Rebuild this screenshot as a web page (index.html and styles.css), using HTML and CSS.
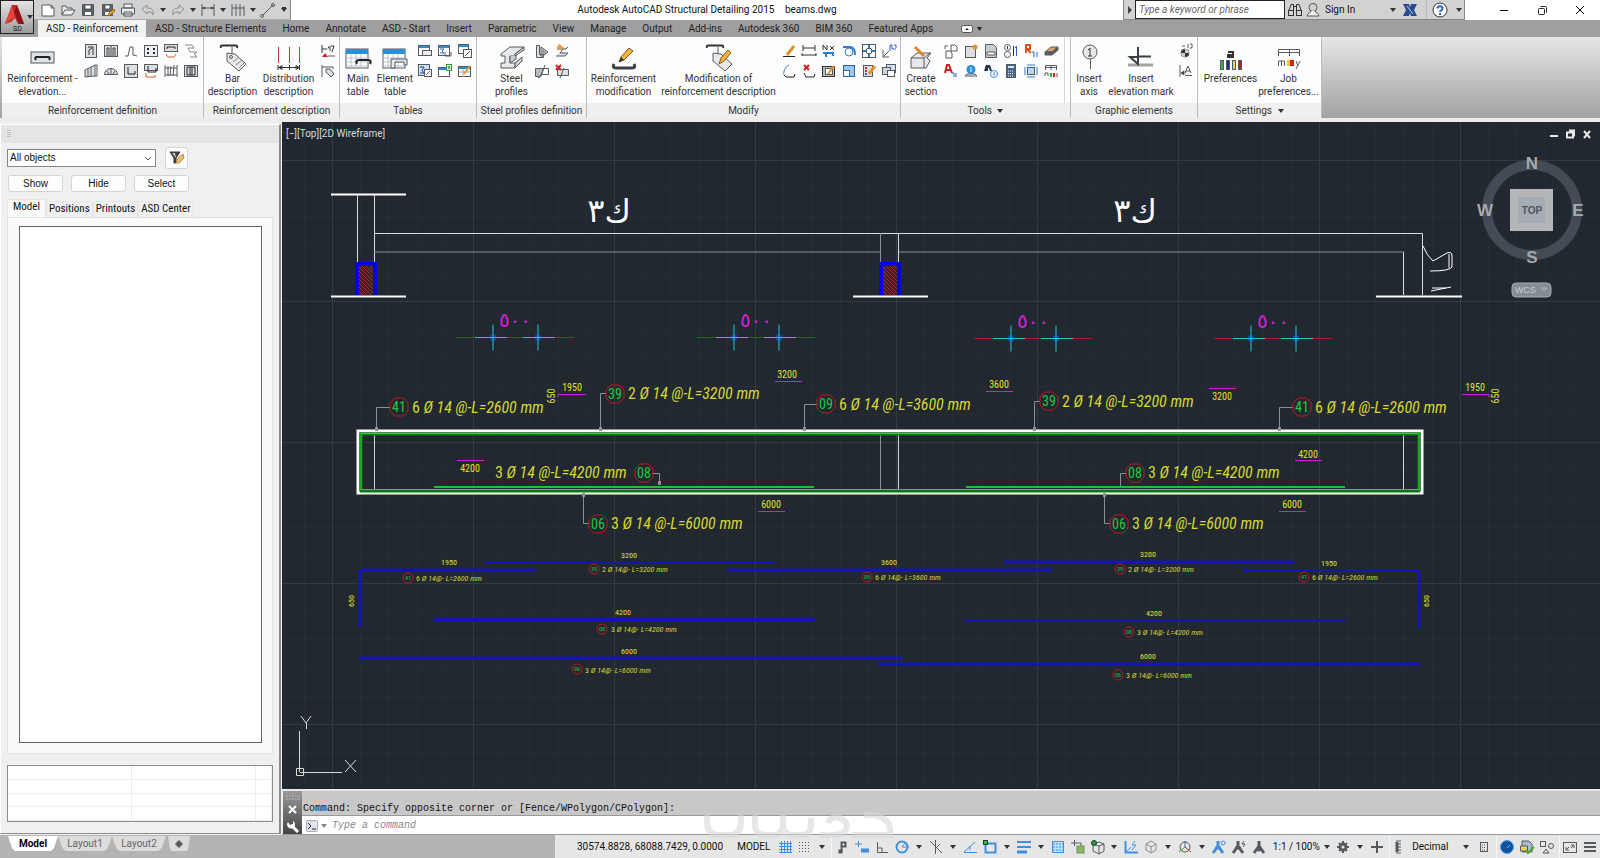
FILE: index.html
```
<!DOCTYPE html>
<html lang="en">
<head>
  <meta charset="UTF-8" />
  <title>Autodesk AutoCAD Structural Detailing 2015 - beams.dwg</title>
  <link rel="stylesheet" href="styles.css">
</head>
<body>
  <header class="titlebar">
    <button class="app-btn" aria-label="Application menu">
      <svg width="32" height="32" viewBox="0 0 32 32">
        <path d="M4 23 L11 4 H16 L23 23 H17 L14 17 L10 21 Z" fill="#c1272d"/>
        <path d="M11 4 L4 23 L14 16 Z" fill="#e2453c"/>
        <path d="M16 4 L23 23 H18 L13 11 Z" fill="#8e1216"/>
        <path d="M26 14 h6 l-3 4z" fill="#333"/>
      </svg>
      <span>SD</span>
    </button>
    <div class="qat">
      <button aria-label="New"><svg class="ico" viewBox="0 0 16 16"><path d="M2 3h9l3 3v8H2z M11 3v3h3" fill="#fff"/></svg></button>
      <button aria-label="Open"><svg class="ico" viewBox="0 0 16 16"><path d="M2 13V4h4l1 2h5v2 M2 13l3-5h10l-3 5z" fill="#eee"/></svg></button>
      <button aria-label="Save"><svg class="ico" viewBox="0 0 16 16"><path d="M2.500 2.500h11v11h-11z" fill="#5a606a"/><path d="M5 3h6v4H5zM4.500 9.500h7v4h-7z" fill="#fff"/></svg></button>
      <button aria-label="Save as"><svg class="ico" viewBox="0 0 16 16"><path d="M2.500 2.500h10v11h-10z" fill="#5a606a"/><path d="M5 3h5v4H5zM4.500 9.500h5v4h-5z" fill="#fff"/><path d="M8 14l1-3 5-4 1 2-5 4z" fill="#f0b13c" stroke="#a66a10"/></svg></button>
      <button aria-label="Print"><svg class="ico" viewBox="0 0 16 16"><path d="M4 2h8v4H4zM1.500 6h13v6h-13z M4 10h8v4H4z" fill="#eee"/></svg></button>
      <button aria-label="Undo"><svg class="ico dim" viewBox="0 0 16 16"><path d="M2 7l5-4v3c5 0 7 2 6 7-1-3-3-3-6-3v2z"/></svg></button>
      <button class="drop" aria-label="Undo list"></button>
      <button aria-label="Redo"><svg class="ico dim" viewBox="0 0 16 16"><path d="M14 7L9 3v3c-5 0-7 2-6 7 1-3 3-3 6-3v2z"/></svg></button>
      <button class="drop" aria-label="Redo list"></button>
      <button aria-label="Linear dimension"><svg class="ico" viewBox="0 0 16 16"><path d="M2 2v12M14 2v12M2 6h12M2 6l3-1v2zM14 6l-3-1v2z"/></svg></button>
      <button class="drop" aria-label="Dimension list"></button>
      <button aria-label="Chain dimension"><svg class="ico" viewBox="0 0 16 16"><path d="M2 2v12M6 2v12M10 2v12M14 4v10M2 6h12"/></svg></button>
      <button class="drop" aria-label="Chain list"></button>
      <button aria-label="Line"><svg class="ico" viewBox="0 0 16 16"><path d="M3 13L13 3"/><circle cx="2" cy="14" r="1.500"/><circle cx="13" cy="3" r="1.500"/></svg></button>
      <button class="drop more" aria-label="Customize toolbar"></button>
    </div>
    <h1 class="doc-title">Autodesk AutoCAD Structural Detailing 2015 <span>beams.dwg</span></h1>
    <div class="infocenter">
      <button class="collapse" aria-label="Collapse search"><svg width="6" height="8" viewBox="0 0 6 8"><path d="M1 0l4 4-4 4z" fill="#444"/></svg></button>
      <input class="search" type="text" placeholder="Type a keyword or phrase" aria-label="Search">
      <button aria-label="Find"><svg class="ico" viewBox="0 0 16 16"><path d="M1.500 9.500L4 2.500h2.500v6M14.500 9.500L12 2.500H9.500v6M6.500 4.500h3" stroke="#333"/><rect x="1.500" y="8.500" width="5" height="5" stroke="#333"/><rect x="9.500" y="8.500" width="5" height="5" stroke="#333"/></svg></button>
      <button class="signin"><svg class="ico" viewBox="0 0 16 16"><circle cx="8" cy="5.500" r="4"/><path d="M6 9c0 2-4 2-4 5h12c0-3-4-3-4-5" fill="#eee"/></svg>Sign In</button>
      <button class="drop" aria-label="Account menu"></button>
      <button class="exchange" aria-label="Exchange apps"><svg class="ico" viewBox="0 0 16 16"><path d="M1 2h6l1 3 1-3h6l-3 6 3 6H9l-1-3-1 3H1l3-6z" fill="#274b8f" stroke="none"/><path d="M5 4l6 8" stroke="#cfd8ea"/></svg></button>
      <button class="help" aria-label="Help"><svg class="ico" viewBox="0 0 16 16"><circle cx="8" cy="8" r="7" fill="#fff" stroke="#333"/><path d="M5.500 6.500c0-3 5-3 5 0 0 2-2.500 1.500-2.500 3.500M8 11v2" stroke="#2a64c8" stroke-width="2"/></svg></button>
      <button class="drop" aria-label="Help menu"></button>
    </div>
    <div class="win-btns">
      <button aria-label="Minimize"><svg class="ico" viewBox="0 0 16 16"><path d="M4 8.500h8" stroke="#000"/></svg></button>
      <button aria-label="Restore"><svg class="ico" viewBox="0 0 16 16"><rect x="4.500" y="6.500" width="6" height="6" rx="1" stroke="#222"/><path d="M6.500 4.500h5q1 0 1 1v5" stroke="#222"/></svg></button>
      <button aria-label="Close"><svg class="ico" viewBox="0 0 16 16"><path d="M4 4l8 8M12 4l-8 8" stroke="#000"/></svg></button>
    </div>
  </header>

  <nav class="ribbon-tabs">
    <button class="active">ASD - Reinforcement</button>
    <button>ASD - Structure Elements</button>
    <button>Home</button>
    <button>Annotate</button>
    <button>ASD - Start</button>
    <button>Insert</button>
    <button>Parametric</button>
    <button>View</button>
    <button>Manage</button>
    <button>Output</button>
    <button>Add-ins</button>
    <button>Autodesk 360</button>
    <button>BIM 360</button>
    <button>Featured Apps</button>
    <button class="ribbon-min" aria-label="Minimize ribbon"><svg width="22" height="8" viewBox="0 0 22 8"><rect x="0.500" y="0.500" width="11" height="7" rx="2" fill="#fff" stroke="#555"/><path d="M4 5l2-2 2 2z" fill="#222"/><path d="M16 2h5l-2.500 4z" fill="#222"/></svg></button>
  </nav>

  <div class="ribbon">
    <section class="panel definition">
      <div class="tools">
        <button class="big"><svg class="ico-lg" viewBox="0 0 28 28"><rect x="2" y="8" width="23" height="11" fill="#dfe3e6"/><path d="M7 16q-2-3 1-3h11q3 0 1 3" stroke="#222" stroke-width="2"/></svg>Reinforcement -<br>elevation...</button>
        <div class="small-grid cols-6">
          <button aria-label="Column"><svg class="ico" viewBox="0 0 16 16"><rect x="2.500" y="1.500" width="11" height="13" fill="#dcdfe2"/><path d="M5 4h5v8M6 12V7l3-2" stroke="#333"/></svg></button>
          <button aria-label="Wall"><svg class="ico" viewBox="0 0 16 16"><rect x="1.500" y="2.500" width="13" height="11" fill="#dcdfe2"/><path d="M4 13V5h2v8M10 13V5h2v8M8 3v10" stroke="#444"/></svg></button>
          <button aria-label="Bar shape"><svg class="ico" viewBox="0 0 16 16"><path d="M2 13h3l2-9h3v8l4 1"/></svg></button>
          <button aria-label="Slab"><svg class="ico" viewBox="0 0 16 16"><rect x="1.500" y="2.500" width="13" height="11" fill="#eceff1"/><path d="M4 6h2M10 6h2M4 10h2M10 10h2" stroke="#222" stroke-width="2"/></svg></button>
          <button aria-label="Beam"><svg class="ico" viewBox="0 0 16 16"><rect x="1.500" y="1.500" width="13" height="7" fill="#dcdfe2"/><path d="M4 6V4h8v2" stroke="#222"/><path d="M3 11l2 3h6l2-3" stroke="#d2622a"/></svg></button>
          <button aria-label="Bar list"><svg class="ico dim" viewBox="0 0 16 16"><path d="M2 2h7l2 3H5l2 4h7l-3 2 3 3H7"/></svg></button>
          <button aria-label="Ramp"><svg class="ico" viewBox="0 0 16 16"><path d="M2 7l10-5v11l-10 1zM5 6v8M8 4v9" fill="#dcdfe2"/><path d="M12 2h2v11h-2"/></svg></button>
          <button aria-label="Arc"><svg class="ico" viewBox="0 0 16 16"><path d="M1.500 11.500a6.500 6 0 0 1 13 0z M8 6v5M4 8l2 3M12 8l-2 3" fill="#dcdfe2"/></svg></button>
          <button aria-label="Frame"><svg class="ico" viewBox="0 0 16 16"><rect x="1.500" y="1.500" width="13" height="13" fill="#dcdfe2"/><path d="M5 4v7h7v-3" stroke="#222"/></svg></button>
          <button aria-label="Lintel"><svg class="ico" viewBox="0 0 16 16"><rect x="1.500" y="1.500" width="13" height="6" fill="#dcdfe2"/><path d="M5 3v6h8V5" stroke="#222"/><path d="M3 10v4h9v-2" stroke="#d2622a"/></svg></button>
          <button aria-label="Mesh"><svg class="ico" viewBox="0 0 16 16"><path d="M2 2v12M5 3v10M8 3l-1 10M11 2l-1 11M14 2v12M2 5h12M2 12h12"/></svg></button>
          <button aria-label="Stirrups"><svg class="ico" viewBox="0 0 16 16"><rect x="1.500" y="2.500" width="13" height="11" fill="#dcdfe2"/><path d="M4 4v8M7 4v8M9 4v8M12 4v8M4 4h8M4 12h8" stroke="#222"/></svg></button>
        </div>
      </div>
      <h2>Reinforcement definition</h2>
    </section>

    <section class="panel description">
      <div class="tools">
        <button class="big"><svg class="ico-lg" viewBox="0 0 28 28"><path d="M2 4q-1-3 2-2.500h12q3-.5 2 2.500" stroke="#333" stroke-width="2"/><path d="M13 3v8"/><path d="M8 9l8 1 11 10-7 7L8 17z" fill="#e6e8ea"/><circle cx="12" cy="13" r="1.500"/><path d="M14 18l6-5M17 21l6-5M20 24l5-5" stroke="#888"/></svg>Bar<br>description</button>
        <button class="big wide"><svg class="ico-lg" viewBox="0 0 28 28"><path d="M3.500 3v16M14.500 3v16M24.500 3v16" stroke="#b0422f"/><path d="M3 23.500h22M3 21v5M14.500 21v5M24.500 21v5M4 23.500l3-2v4zM24 23.500l-3-2v4z" stroke="#333"/></svg>Distribution<br>description</button>
        <div class="small-grid cols-1">
          <button aria-label="Dimension tag"><svg class="ico" viewBox="0 0 16 16"><path d="M2 2v8M2 6h5M10 3v5M8 5.500l1-2M11 3h3l-2 6" stroke="#333"/><path d="M2 14l3-4 3 4z" fill="#d02020" stroke="none"/><path d="M8 13h7"/></svg></button>
          <button aria-label="Bar tag"><svg class="ico" viewBox="0 0 16 16"><path d="M2 2v12M2 4h11v2"/><path d="M6 6h4l4 5-3 3-5-5z" fill="#dcdfe2"/></svg></button>
        </div>
      </div>
      <h2>Reinforcement description</h2>
    </section>

    <section class="panel tables">
      <div class="tools">
        <button class="big narrow"><svg class="ico-lg" viewBox="0 0 28 28"><rect x="2" y="5" width="22" height="19" fill="#fff"/><path d="M2 5h22v5H2z" fill="#2d8fd0" stroke="none"/><path d="M2 14h22M2 18h22M2 22h22M7 10v14M12 10v14M17 10v14" stroke="#b8c4cc"/><path d="M13 20q-2-4 2-4h9q4 0 2 4" stroke="#222" stroke-width="2"/></svg>Main<br>table</button>
        <button class="big table-el"><svg class="ico-lg" viewBox="0 0 28 28"><rect x="2" y="5" width="22" height="19" fill="#fff"/><path d="M2 5h22v5H2z" fill="#2d8fd0" stroke="none"/><path d="M2 14h22M2 18h22M2 22h22M7 10v14M12 10v14M17 10v14" stroke="#b8c4cc"/><path d="M10 24v-9h16v6h-3v-3h-9v6z" fill="#e6e8ea"/></svg>Element<br>table</button>
        <div class="small-grid cols-3">
          <button aria-label="Table bar"><svg class="ico" viewBox="0 0 16 16"><rect x="1.500" y="2.500" width="11" height="10" fill="#fff"/><path d="M2 4h10" stroke="#2d8fd0" stroke-width="2"/><rect x="5.500" y="7.500" width="9" height="5" fill="#eee"/></svg></button>
          <button aria-label="Table sum"><svg class="ico" viewBox="0 0 16 16"><rect x="1.500" y="2.500" width="11" height="10" fill="#fff"/><path d="M2 4h10" stroke="#2d8fd0" stroke-width="2"/><path d="M3 6h4l-2 2 2 2H3" stroke="#2a64c8"/><path d="M8 9v4h6V9"/></svg></button>
          <button aria-label="Table link"><svg class="ico" viewBox="0 0 16 16"><rect x="1.500" y="1.500" width="10" height="9" fill="#fff"/><path d="M2 3h9" stroke="#2d8fd0" stroke-width="2"/><rect x="6.500" y="6.500" width="8" height="8" fill="#fff"/><path d="M8 13l5-5"/></svg></button>
          <button aria-label="Sum table"><svg class="ico" viewBox="0 0 16 16"><rect x="1.500" y="1.500" width="11" height="11" fill="#cfe0f4"/><path d="M3 4h4L5 7l2 3H3" stroke="#1d3fb0"/><rect x="7.500" y="6.500" width="7" height="7" fill="#fff"/><path d="M9 12l4-4"/></svg></button>
          <button aria-label="Export table"><svg class="ico" viewBox="0 0 16 16"><rect x="1.500" y="4.500" width="11" height="9" fill="#fff"/><path d="M2 6h10" stroke="#2d8fd0" stroke-width="2"/><rect x="9.500" y="1.500" width="5" height="6" fill="#e3f5e3" stroke="#2f9a3c"/><path d="M11 3l2 3M13 3l-2 3" stroke="#2f9a3c"/></svg></button>
          <button aria-label="Edit table"><svg class="ico" viewBox="0 0 16 16"><rect x="1.500" y="3.500" width="12" height="10" fill="#fff"/><path d="M2 5h11" stroke="#2d8fd0" stroke-width="2"/><path d="M2 9h11M6 6v8" stroke="#aaa"/><path d="M7 11l6-8" stroke="#e09a30" stroke-width="2"/></svg></button>
        </div>
      </div>
      <h2>Tables</h2>
    </section>

    <section class="panel steel">
      <div class="tools">
        <button class="big table-el"><svg class="ico-lg" viewBox="0 0 28 28"><path d="M3 10L12 3h14l-9 7v2h-5v7h5v5H3v-5h4v-7H3z" fill="#e6e8ea"/><path d="M17 10l9-7v3l-9 6zM12 12v7l6-4V11M17 19l7-6v4l-7 7z" fill="#c9ced2"/></svg>Steel<br>profiles</button>
        <div class="small-grid cols-2">
          <button aria-label="Plate"><svg class="ico" viewBox="0 0 16 16"><path d="M2.500 2.500h3v9h4v3h-7zM7 4l7 5-5 4H7z" fill="#dcdfe2"/><path d="M9 6v5M11 8v3"/></svg></button>
          <button aria-label="New profile"><svg class="ico" viewBox="0 0 16 16"><path d="M3 6h9l2-2M2 13h9l3-3H6l3-4" fill="#dcdfe2"/><path d="M3 4l2-3 3 2 2 2-3 1-3 1z" fill="#f39a3a" stroke="none"/></svg></button>
          <button aria-label="Cut"><svg class="ico" viewBox="0 0 16 16"><path d="M1.500 5.500h8l-3 8h-5z" fill="#b8bcc0"/><path d="M9.500 5.500h5v6h-7M4 15l3-2 4-11"/></svg></button>
          <button aria-label="Delete cut"><svg class="ico" viewBox="0 0 16 16"><path d="M3.500 6.500h11v6h-11z" fill="#dcdfe2"/><path d="M6 15l4-10"/><path d="M2 2l5 5M7 2l-5 5" stroke="#d02020" stroke-width="2"/></svg></button>
        </div>
      </div>
      <h2>Steel profiles definition</h2>
    </section>

    <section class="panel modify">
      <div class="tools">
        <button class="big mod"><svg class="ico-lg" viewBox="0 0 28 28"><path d="M4 20q-2 4 2 4h16q4 0 2-4" stroke="#3a3f45" stroke-width="3"/><path d="M9 18l2-5 8-9 4 3-9 9z" fill="#f5b53c" stroke="#80551a"/><path d="M9 18l2-5 3 3z" fill="#333" stroke="none"/></svg>Reinforcement<br>modification</button>
        <button class="big mod-desc"><svg class="ico-lg" viewBox="0 0 28 28"><path d="M2 4q-1-3 2-2.500h12q3-.5 2 2.500" stroke="#333" stroke-width="2"/><path d="M13 3v8"/><path d="M8 9l8 1 11 10-7 7L8 17z" fill="#e6e8ea"/><path d="M14 20l2-6 7-8 3 3-7 8z" fill="#f5b53c" stroke="#80551a"/></svg>Modification of<br>reinforcement description</button>
        <div class="small-grid cols-6">
          <button aria-label="Edit"><svg class="ico" viewBox="0 0 16 16"><path d="M2 13.500h12" stroke="#222"/><path d="M6 12l7-9" stroke="#e0952c" stroke-width="3"/></svg></button>
          <button aria-label="Stretch"><svg class="ico" viewBox="0 0 16 16"><path d="M2 2v6M14 2v6M2 5h12M1 12h14M1 10v3M15 10v3" stroke="#333"/></svg></button>
          <button aria-label="Multiply"><svg class="ico" viewBox="0 0 16 16"><path d="M2 7V2l4 5V2M9 3l4 4M13 3l-4 4" stroke="#333"/><path d="M2 10h10v3M5 10v4" stroke="#2a7fd0" stroke-width="2"/></svg></button>
          <button aria-label="Rotate bar"><svg class="ico" viewBox="0 0 16 16"><path d="M2 4h7c4 0 5 4 5 8" stroke="#2a7fd0" stroke-width="2"/><circle cx="8" cy="9" r="4" stroke="#2a7fd0"/></svg></button>
          <button aria-label="Explode"><svg class="ico" viewBox="0 0 16 16"><rect x="1.500" y="1.500" width="13" height="13"/><path d="M8 2v4M8 10v4M2 8h4M10 8h4" stroke="#2a7fd0" stroke-width="2"/><circle cx="8" cy="8" r="3"/></svg></button>
          <button aria-label="Coordinates"><svg class="ico" viewBox="0 0 16 16"><path d="M2 7v7h6M2 14l6-6"/><path d="M9 8V2h2v4h4M13 2h2v3" stroke="#2a64c8"/></svg></button>
          <button aria-label="Arc bar"><svg class="ico" viewBox="0 0 16 16"><path d="M8 2C4 4 2 9 3 12" stroke="#2a7fd0"/><path d="M3 12l2 2h8l1-3" stroke="#222"/></svg></button>
          <button aria-label="Delete bar"><svg class="ico" viewBox="0 0 16 16"><path d="M3 10l2 4h8l1-3" stroke="#222"/><path d="M3 2l5 5M8 2l-5 5" stroke="#d02020" stroke-width="2"/></svg></button>
          <button aria-label="Frame edit"><svg class="ico" viewBox="0 0 16 16"><rect x="1.500" y="3.500" width="12" height="10" fill="#b8bcc0" stroke="#333"/><rect x="4.500" y="5.500" width="7" height="6" fill="#fff"/><path d="M7 11l6-8" stroke="#e0952c" stroke-width="2"/></svg></button>
          <button aria-label="Scale"><svg class="ico" viewBox="0 0 16 16"><rect x="2.500" y="2.500" width="11" height="11" fill="#9cc7ec" stroke="#2a64a8"/><rect x="2.500" y="7.500" width="6" height="6" fill="#fff" stroke="#2a64a8"/></svg></button>
          <button aria-label="Edit properties"><svg class="ico" viewBox="0 0 16 16"><rect x="2.500" y="2.500" width="9" height="11" fill="#dcdfe2"/><path d="M4 5h2M4 8h2" stroke="#c33" stroke-width="2"/><path d="M4 11h2" stroke="#36c" stroke-width="2"/><path d="M8 11l6-8" stroke="#e0952c" stroke-width="3"/></svg></button>
          <button aria-label="Order"><svg class="ico" viewBox="0 0 16 16"><rect x="5.500" y="1.500" width="9" height="8" fill="#cfe0f4"/><rect x="1.500" y="4.500" width="8" height="7" fill="#cfd4d8"/><rect x="6.500" y="7.500" width="7" height="6" fill="#fff"/></svg></button>
        </div>
      </div>
      <h2>Modify</h2>
    </section>

    <section class="panel utilities">
      <div class="tools">
        <button class="big table-el"><svg class="ico-lg" viewBox="0 0 28 28"><path d="M4 14l6-5h14l-4 5 3 3-4 7H4z" fill="#e6e8ea"/><path d="M4 14h13l6-5M17 14v10"/><path d="M8 3l9 9" stroke="#e0862c" stroke-width="3"/></svg>Create<br>section</button>
        <div class="small-grid cols-6">
          <button aria-label="Convert"><svg class="ico" viewBox="0 0 16 16"><path d="M8 2h4l2 2v4H8zM3 8h4l2 2v5H3zM2 6V3h3"/></svg></button>
          <button aria-label="New style"><svg class="ico" viewBox="0 0 16 16"><rect x="2.500" y="3.500" width="10" height="11" fill="#dcdfe2"/><circle cx="12" cy="4" r="2.500" fill="#f08a2c" stroke="none"/></svg></button>
          <button aria-label="Report"><svg class="ico" viewBox="0 0 16 16"><path d="M2.500 1.500h8l3 3v10h-11z" fill="#c9ced2"/><path d="M4 9h8v3H4z" fill="#fff"/></svg></button>
          <button aria-label="Renumber"><svg class="ico" viewBox="0 0 16 16"><circle cx="4.500" cy="4.500" r="3"/><circle cx="4.500" cy="11.500" r="3"/><path d="M4.500 3v3M10.500 3v10" stroke="#333"/><path d="M13.500 3v10M12 5l1.500-2" stroke="#2a64c8"/></svg></button>
          <button aria-label="Replace"><svg class="ico" viewBox="0 0 16 16"><path d="M3 10V2h4v4H4l4 4" stroke="#d8541c" stroke-width="2"/><path d="M9 9h2v5M14 9v5" stroke="#2a64c8"/></svg></button>
          <button aria-label="Erase"><svg class="ico" viewBox="0 0 16 16"><path d="M2 9l6-5h7l-6 5z" fill="#d9a566"/><path d="M2 9v3h7l6-5V4L9 9H2" fill="#555e6e"/></svg></button>
          <button aria-label="Text replace"><svg class="ico" viewBox="0 0 16 16"><path d="M2 10l2-8h2l3 8M3 7h5" stroke="#c22" stroke-width="2"/><path d="M9 10h2v4M13 10v4" stroke="#2a64c8"/></svg></button>
          <button aria-label="Information"><svg class="ico" viewBox="0 0 16 16"><circle cx="8" cy="6.500" r="4.500" fill="#2d8fe0" stroke="none"/><path d="M8 4v5" stroke="#fff"/><path d="M2 13l2-2h8l2 2z" fill="#eee"/></svg></button>
          <button aria-label="Find bar"><svg class="ico" viewBox="0 0 16 16"><path d="M2 8l2-6v6M6 2l2 6M4 4h3" stroke="#234" stroke-width="2"/><circle cx="11" cy="11" r="3.500" fill="#fff" stroke="#3a90d8"/><path d="M11 9v4" stroke="#3a90d8"/></svg></button>
          <button aria-label="Calculator"><svg class="ico" viewBox="0 0 16 16"><rect x="3.500" y="1.500" width="9" height="13" fill="#46648a"/><path d="M5 4h6" stroke="#cfe7ff" stroke-width="2"/><path d="M5 8h6M5 10.500h6M5 13h6" stroke="#fff" stroke-dasharray="1 1"/></svg></button>
          <button aria-label="Section view"><svg class="ico" viewBox="0 0 16 16"><rect x="4.500" y="4.500" width="7" height="7" fill="#bcd8f0"/><path d="M2 4v8M14 4v8M4 2h8M4 14h8" stroke="#2a7fd0"/></svg></button>
          <button aria-label="Table styles"><svg class="ico" viewBox="0 0 16 16"><path d="M2.500 7V2.500h11V7M2 4.500h11M8 2v5"/><path d="M2 13v-3h3v3" /><path d="M8 10v4" stroke="#3a3" stroke-width="2"/><path d="M11 10v4" stroke="#c22" stroke-width="2"/><path d="M14 10v4"/></svg></button>
        </div>
      </div>
      <h2>Tools <i class="tri"></i></h2>
    </section>

    <section class="panel graphic">
      <div class="tools">
        <button class="big narrow"><svg class="ico-lg" viewBox="0 0 28 28"><circle cx="15" cy="8" r="7" fill="#e6e8ea"/><path d="M15.500 15v10"/><path d="M13 6l2-2v8M13 12h4" stroke="#333"/></svg>Insert<br>axis</button>
        <button class="big mod"><svg class="ico-lg" viewBox="0 0 28 28"><path d="M1 21h25" stroke="#a0a4a8" stroke-width="3"/><path d="M11 3v17M11 12.500h13" stroke="#3a3f45" stroke-width="2"/><path d="M3 13h8v7z" stroke="#3a3f45" stroke-width="2"/></svg>Insert<br>elevation mark</button>
        <div class="small-grid cols-1">
          <button aria-label="Level"><svg class="ico" viewBox="0 0 16 16"><circle cx="7" cy="10" r="4" fill="#333"/><path d="M7 10h4a4 4 0 0 0-4-4zM7 10H3a4 4 0 0 0 4 4z" fill="#ccc" stroke="none"/><path d="M4 3h3M10 1v4M12 1h2v4h-2"/></svg></button>
          <button aria-label="Text mark"><svg class="ico" viewBox="0 0 16 16"><path d="M2 2v12M3 10l3-2v4z" fill="#333"/><path d="M7 10l3-7 3 7M8 8h4M7 12.500h7"/></svg></button>
        </div>
      </div>
      <h2>Graphic elements</h2>
    </section>

    <section class="panel settings">
      <div class="tools">
        <button class="big wide"><svg class="ico-lg" viewBox="0 0 28 28"><path d="M11 8h5v5h-5v-2h5" stroke="#333" stroke-width="2"/><rect x="3.500" y="16.500" width="3" height="9" fill="#3cb043"/><rect x="9.500" y="16.500" width="3" height="9" fill="#2020a0"/><rect x="15.500" y="16.500" width="3" height="9" fill="#e8d44a"/><rect x="21.500" y="16.500" width="3" height="9" fill="#b02020"/></svg>Preferences</button>
        <button class="big wide"><svg class="ico-lg" viewBox="0 0 28 28"><path d="M3.500 12V5.500h21V12M3.500 8.500h21M14.500 5.500V12"/><path d="M3.500 22v-5h6v5M6.500 17v5M21 17l2 5M25 17l-4 8"/><path d="M12 16h4v6h-4z" fill="#f0d020" stroke="none"/><path d="M15 16h4v6h-4z" fill="#c22" stroke="none"/></svg>Job<br>preferences...</button>
      </div>
      <h2>Settings <i class="tri"></i></h2>
    </section>
  </div>

  <main class="workspace">
    <aside class="palette">
      <div class="palette-grip"><svg width="4" height="8" viewBox="0 0 4 8"><path d="M1 0v8M3 0v8" stroke="#999" stroke-dasharray="1 1"/></svg></div>
      <div class="filter-row">
        <select aria-label="Object filter"><option>All objects</option></select>
        <button aria-label="Edit filter"><svg class="ico" viewBox="0 0 16 16"><path d="M1 2h10l-4 6v5H5V8z" fill="#444" stroke="#333"/><path d="M3 3h3l1 5z" fill="#ccc" stroke="none"/><path d="M7 13l2-5 5-4 1 4-5 5z" fill="#e6c374" stroke="#b08a40"/></svg></button>
      </div>
      <div class="action-row">
        <button>Show</button>
        <button>Hide</button>
        <button>Select</button>
      </div>
      <div class="palette-tabs">
        <button class="active">Model</button>
        <button>Positions</button>
        <button>Printouts</button>
        <button>ASD Center</button>
      </div>
      <div class="tab-page"><div class="object-list"></div></div>
      <table class="props">
        <tr><td></td><td></td><td></td></tr>
        <tr><td></td><td></td><td></td></tr>
        <tr><td></td><td></td><td></td></tr>
        <tr><td></td><td></td><td></td></tr>
      </table>
    </aside>

    <div class="editor">
      <svg class="drawing" viewBox="282 122 1318 667" preserveAspectRatio="xMinYMin meet">
        <defs>
          <pattern id="grid" x="332" y="160" width="141" height="141" patternUnits="userSpaceOnUse">
            <path d="M28.500 0v141M56.500 0v141M85.500 0v141M113.500 0v141M0 28.500h141M0 56.500h141M0 85.500h141M0 113.500h141" stroke="#252d36"/>
            <path d="M0.500 0v141M0 0.500h141" stroke="#323b46"/>
          </pattern>
          <pattern id="hatch" width="4" height="4" patternUnits="userSpaceOnUse">
            <rect width="4" height="4" fill="#3a2226"/>
            <path d="M0 0l4 4M-1 3l2 2M3 -1l2 2" stroke="#a03030"/>
          </pattern>
          <g id="crosses">
            <path d="M0 0h118" stroke="#b01c22"/>
            <path d="M34 -3h6v6h-6zM79 -3h6v6h-6z" fill="#1240a0"/>
            <path d="M19 0h32M67 0h32M37 -13v26M82 -13v26" stroke="#28c4d4"/>
          </g>
          <path id="tag" d="M-4 -9h8l5 5v8l-5 5h-8l-5-5v-8z"/>
        </defs>
        <rect x="282" y="122" width="1318" height="667" fill="url(#grid)"/>

        <!-- elevation -->
        <g class="thin">
          <path d="M357.500 195v68M374.500 195v68M374 233.500H1422.500V295M898.500 233v30M1403.500 252v43" stroke="#d8dadc"/>
          <path d="M374 252H880M899 252H1404M880.500 233v30" stroke="#8b9096"/>
          <path d="M331 194.500h75M331 296.500h75M853 296.500h75M1376 296.500h86" stroke="#fff" stroke-width="2"/>
        </g>
        <rect x="357" y="264" width="18" height="31" fill="url(#hatch)"/>
        <rect x="881" y="264" width="18" height="31" fill="url(#hatch)"/>
        <path d="M357 295V264h18v31M881 295V264h18v31" class="stub"/>
        <text class="axis-name" x="609" y="222">ك٣</text>
        <text class="axis-name" x="1135" y="222">ك٣</text>
        <path d="M1423 246q4 10 10 15l14-8q5-2 5 3v11q-2 4-22 4M1449 254v14M1431 291l20-4M1432 288h14" class="scrawl"/>

        <!-- stirrup marks -->
        <use href="#crosses" x="456" y="337.500"/>
        <use href="#crosses" x="697" y="337.500"/>
        <use href="#crosses" x="974" y="338.500"/>
        <use href="#crosses" x="1214" y="338.500"/>
        <g class="spacing">
          <text x="515" y="327">٥٠٠</text>
          <text x="756" y="327">٥٠٠</text>
          <text x="1033" y="328">٥٠٠</text>
          <text x="1273" y="328">٥٠٠</text>
        </g>

        <!-- beam -->
        <rect x="358" y="431" width="1064" height="62" fill="none" stroke="#fff" stroke-width="3"/>
        <path d="M374.500 432v60M898.500 432v60M1403.500 432v60" stroke="#d0d3d6"/>
        <path d="M880.500 432v60" stroke="#8b9096"/>
        <path d="M361 491V434h1058v57" fill="none" stroke="#0d7a17" stroke-width="3"/>
        <path d="M361 489.500V433.500h1058v56" fill="none" stroke="#2bd62b"/>
        <path d="M360 491h1060" stroke="#15701c" stroke-width="3"/>
        <path d="M360 489.500h1060" stroke="#2bd62b"/>
        <path d="M434 487h380M966 487h379" stroke="#14c81c" stroke-width="2"/>

        <!-- leaders -->
        <path class="leader" d="M376.500 430V407.500H390M600.500 430V393.500H606M804.500 430V404.500H817M1034.500 430V401.500H1040M1279.500 430V407.500H1293M652 473.500H659.500V485M1126 473.500H1120.500V486M583.500 493V523.500H589M1104.500 493V523.500H1110"/>
        <path d="M375 427h3v4h-3zM599 427h3v4h-3zM803 427h3v4h-3zM1033 427h3v4h-3zM1278 427h3v4h-3zM658 481h3v4h-3zM582 493h3v4h-3zM1103 493h3v4h-3z" fill="#8b9096"/>

        <g class="tags">
          <use href="#tag" x="399" y="407"/><use href="#tag" x="615" y="394"/><use href="#tag" x="826" y="404"/>
          <use href="#tag" x="1049" y="401"/><use href="#tag" x="1302" y="407"/><use href="#tag" x="644" y="473"/>
          <use href="#tag" x="1135" y="473"/><use href="#tag" x="598" y="524"/><use href="#tag" x="1119" y="524"/>
        </g>
        <g class="tag-no">
          <text x="399" y="412">41</text><text x="615" y="399">39</text><text x="826" y="409">09</text>
          <text x="1049" y="406">39</text><text x="1302" y="412">41</text><text x="644" y="478">08</text>
          <text x="1135" y="478">08</text><text x="598" y="529">06</text><text x="1119" y="529">06</text>
        </g>
        <g class="bar-text">
          <text x="412" y="413">6 <tspan>Ø 14 @-L=2600 mm</tspan></text>
          <text x="628" y="399">2 <tspan>Ø 14 @-L=3200 mm</tspan></text>
          <text x="839" y="410">6 <tspan>Ø 14 @-L=3600 mm</tspan></text>
          <text x="1062" y="407">2 <tspan>Ø 14 @-L=3200 mm</tspan></text>
          <text x="1315" y="413">6 <tspan>Ø 14 @-L=2600 mm</tspan></text>
          <text x="495" y="478">3 <tspan>Ø 14 @-L=4200 mm</tspan></text>
          <text x="1148" y="478">3 <tspan>Ø 14 @-L=4200 mm</tspan></text>
          <text x="611" y="529">3 <tspan>Ø 14 @-L=6000 mm</tspan></text>
          <text x="1132" y="529">3 <tspan>Ø 14 @-L=6000 mm</tspan></text>
        </g>

        <!-- dimensions -->
        <path class="dim-line" d="M558 397v-2.500H586M775 381.500h27M457 460.500h27M758 511.500h27M986 391.500h27M1209 388.500h27M1462 394.500h27v3M1295 460.500h27M1279 511.500h27"/>
        <g class="dim-text">
          <text x="572" y="391">1950</text><text x="787" y="378">3200</text><text x="470" y="472">4200</text>
          <text x="771" y="508">6000</text><text x="999" y="388">3600</text><text x="1222" y="400">3200</text>
          <text x="1475" y="391">1950</text><text x="1308" y="458">4200</text><text x="1292" y="508">6000</text>
          <text transform="translate(555 396) rotate(-90)">650</text>
          <text transform="translate(1499 396) rotate(-90)">650</text>
        </g>

        <!-- bar schedule -->
        <path class="bar" d="M360 627V574q0-4 4-4H536M485 562.500H775M727 570H1052M434 619.500H814M359 658H902M1004 562H1294M1243 570.500H1415q4 0 4 4V628M965 620.500H1345M878 664H1420"/>
        <g class="dim-text small">
          <text x="449" y="565">1950</text><text x="629" y="558">3200</text><text x="889" y="565">3600</text>
          <text x="623" y="615">4200</text><text x="629" y="654">6000</text><text x="1148" y="557">3200</text>
          <text x="1329" y="566">1950</text><text x="1154" y="616">4200</text><text x="1148" y="659">6000</text>
          <text transform="translate(354 601) rotate(-90)">650</text>
          <text transform="translate(1429 601) rotate(-90)">650</text>
        </g>
        <g class="tags">
          <circle cx="408" cy="578" r="5"/><circle cx="594" cy="569" r="5"/><circle cx="867" cy="577" r="5"/>
          <circle cx="602" cy="629" r="5"/><circle cx="577" cy="669" r="5"/><circle cx="1120" cy="569" r="5"/>
          <circle cx="1304" cy="577" r="5"/><circle cx="1129" cy="632" r="5"/><circle cx="1118" cy="675" r="5"/>
        </g>
        <g class="tag-no tiny">
          <text x="408" y="580">41</text><text x="594" y="571">39</text><text x="867" y="579">09</text>
          <text x="602" y="631">08</text><text x="577" y="671">06</text><text x="1120" y="571">39</text>
          <text x="1304" y="579">41</text><text x="1129" y="634">08</text><text x="1118" y="677">06</text>
        </g>
        <g class="bar-text tiny">
          <text x="416" y="581">6 <tspan>Ø 14@- L=2600 mm</tspan></text>
          <text x="602" y="572">2 <tspan>Ø 14@- L=3200 mm</tspan></text>
          <text x="875" y="580">6 <tspan>Ø 14@- L=3600 mm</tspan></text>
          <text x="611" y="632">3 <tspan>Ø 14@- L=4200 mm</tspan></text>
          <text x="585" y="673">3 <tspan>Ø 14@- L=6000 mm</tspan></text>
          <text x="1128" y="572">2 <tspan>Ø 14@- L=3200 mm</tspan></text>
          <text x="1312" y="580">6 <tspan>Ø 14@- L=2600 mm</tspan></text>
          <text x="1137" y="635">3 <tspan>Ø 14@- L=4200 mm</tspan></text>
          <text x="1126" y="678">3 <tspan>Ø 14@- L=6000 mm</tspan></text>
        </g>

        <!-- ucs icon -->
        <path d="M296.500 768.500h7v7h-7zM299.500 772V731M300 772.500h42M301 716l5 7 5-7M306.500 723v6M345 760l11 12M356 760l-11 12" fill="none" stroke="#d6d8da"/>

        <!-- view cube -->
        <circle cx="1532" cy="210" r="45" fill="none" stroke="#434b54" stroke-width="10"/>
        <rect x="1510" y="189" width="43" height="42" fill="#b3b5b6"/>
        <rect x="1518" y="197" width="27" height="26" fill="#a5adb4"/>
        <g class="cube">
          <text x="1532" y="214" class="face">TOP</text>
          <text x="1532" y="169">N</text><text x="1532" y="263">S</text>
          <text x="1485" y="216">W</text><text x="1578" y="216">E</text>
        </g>
        <rect x="1512" y="283" width="39" height="14" rx="4" fill="#868c96" stroke="#a4a9b0"/>
        <text x="1515" y="293" class="wcs">WCS</text>
        <path d="M1541 288h6l-3 3z" fill="none" stroke="#b4b8be"/>

        <text x="286" y="137" class="view-label">[−][Top][2D Wireframe]</text>
        <path d="M1550 136h8" stroke="#e8e8e8" stroke-width="2"/>
        <path d="M1567 132.500h6v5h-6zM1569 130.500h5v6" fill="none" stroke="#e8e8e8" stroke-width="2"/>
        <path d="M1584 131l6 7M1590 131l-6 7" stroke="#e8e8e8" stroke-width="2"/>
      </svg>

      <div class="command">
        <div class="command-side">
          <svg width="19" height="42" viewBox="0 0 19 42"><path d="M3 5h14M3 8h14" stroke="#bbb" stroke-dasharray="2 1"/><path d="M6 15l7 7M13 15l-7 7" stroke="#fff" stroke-width="2"/><path d="M8 34l7 7" stroke="#fff" stroke-width="3"/><path d="M5 31l2 3 3-1v-3a4 4 0 1 1-5 1" fill="#fff"/></svg>
        </div>
        <div class="command-body">
          <p>Command: Specify opposite corner or [Fence/WPolygon/CPolygon]:</p>
          <div class="prompt">
            <svg width="12" height="12" viewBox="0 0 12 12"><rect x="0.500" y="0.500" width="11" height="11" rx="1" fill="#dfe4e8" stroke="#aab"/><path d="M2 3l3 3-3 3M6 9h4" fill="none" stroke="#223"/></svg>
            <button class="drop" aria-label="Recent commands"></button>
            <input type="text" placeholder="Type a command" aria-label="Command line">
          </div>
        </div>
        <!-- brand mark -->
        <svg class="mark" viewBox="0 0 192 36" aria-hidden="true"><path d="M3 12v7q0 13 13 13h8q13 0 13-13v-7M51 12v9q0 11 10 11h8q10 0 10-11v-9M79 21q0 11 10 11h8q10 0 10-11v-6M124 20q4-8 12-5 9 4 6 12-2 5-14 5h-12M148 32h38q2-17-16-20h-10"/></svg>
      </div>
    </div>
  </main>

  <footer class="footer">
    <div class="layout-tabs">
      <button class="active">Model</button>
      <button>Layout1</button>
      <button>Layout2</button>
      <button class="add" aria-label="New layout"><svg width="8" height="8" viewBox="0 0 8 8"><circle cx="4" cy="4" r="3" fill="#666"/><path d="M4 0v8M0 4h8" stroke="#555"/></svg></button>
    </div>
    <div class="status">
      <span class="coords">30574.8828, 68088.7429, 0.0000</span>
      <button class="model">MODEL</button>
      <button aria-label="Grid"><svg class="ico blue" viewBox="0 0 16 16"><path d="M4.500 2v12M7.500 2v12M10.500 2v12M13.500 2v12M2 4.500h13M2 7.500h13M2 10.500h13M2 13.500h13"/></svg></button>
      <button aria-label="Snap"><svg class="ico" viewBox="0 0 16 16"><path d="M2 3.500h12M2 6.500h12M2 9.500h12M2 12.500h12" stroke-dasharray="1 2"/></svg></button>
      <button class="drop" aria-label="Snap options"></button>
      <i class="sep"></i>
      <button aria-label="Infer constraints"><svg class="ico" viewBox="0 0 16 16"><path d="M7.500 13V3.500h4v4h-4" stroke-width="2"/><rect x="5" y="11" width="3" height="3" fill="#555"/></svg></button>
      <button aria-label="Dynamic input"><svg class="ico blue" viewBox="0 0 16 16"><path d="M4.500 2v6M1 5h7"/><path d="M7 11.500h8" stroke-width="4"/></svg></button>
      <button aria-label="Ortho"><svg class="ico" viewBox="0 0 16 16"><path d="M3.500 3v10.500H14M4 9h4v4"/></svg></button>
      <button aria-label="Polar"><svg class="ico blue" viewBox="0 0 16 16"><circle cx="8" cy="8" r="5.500" stroke-width="2"/><path d="M8 8h7M8 8l4-5"/></svg></button>
      <button class="drop" aria-label="Polar options"></button>
      <button aria-label="Isodraft"><svg class="ico" viewBox="0 0 16 16"><path d="M2 2l12 12M7.500 1v14M12 5L9 8"/></svg></button>
      <button class="drop" aria-label="Isodraft options"></button>
      <button aria-label="Object tracking"><svg class="ico blue" viewBox="0 0 16 16"><path d="M2 13.500h13M2 13L13 3M8 7v4" /></svg></button>
      <button aria-label="Object snap"><svg class="ico blue" viewBox="0 0 16 16"><rect x="3.500" y="4.500" width="10" height="9" stroke-width="2"/><rect x="1.500" y="1.500" width="4" height="4" fill="#3cb043" stroke="#143"/></svg></button>
      <button class="drop" aria-label="Snap list"></button>
      <button aria-label="Lineweight"><svg class="ico blue" viewBox="0 0 16 16"><path d="M1 3h14M1 8h14" stroke-width="2"/><path d="M1 13h10" stroke-width="3"/></svg></button>
      <button class="drop" aria-label="Lineweight list"></button>
      <button aria-label="Transparency"><svg class="ico blue" viewBox="0 0 16 16"><rect x="2.500" y="2.500" width="11" height="11" fill="#c4dff8"/><path d="M3 5h10M3 8h10M3 11h10" stroke-dasharray="2 1"/></svg></button>
      <button aria-label="Selection cycling"><svg class="ico" viewBox="0 0 16 16"><path d="M4.500 1v6M1 4h10v3"/><rect x="7" y="7" width="7" height="7" fill="#8cb56c" stroke="#6c9550"/></svg></button>
      <button aria-label="3D snap"><svg class="ico" viewBox="0 0 16 16"><path d="M3 5l6-2 5 2v7l-5 3-6-3zM3 5l6 2 5-2M9 7v8"/><circle cx="4" cy="4" r="2.500" fill="#2c9a34" stroke="#143"/></svg></button>
      <button class="drop" aria-label="3D snap list"></button>
      <button aria-label="Dynamic UCS"><svg class="ico blue" viewBox="0 0 16 16"><path d="M2.500 2v11.500H15" stroke-width="2"/><path d="M3 13l5-5M12 2L9 6h4l-4 5" /></svg></button>
      <button aria-label="Filter"><svg class="ico dim" viewBox="0 0 16 16"><path d="M3 5l5-3 5 3v6l-5 3-5-3zM3 5l5 3 5-3M8 8v6"/></svg></button>
      <button class="drop" aria-label="Filter list"></button>
      <button aria-label="Gizmo"><svg class="ico" viewBox="0 0 16 16"><circle cx="8" cy="8" r="5"/><path d="M8 8V2" stroke="#36c"/><path d="M8 8l6 5" stroke="#c33"/><path d="M8 8l-6 5" stroke="#393"/></svg></button>
      <button class="drop" aria-label="Gizmo list"></button>
      <button aria-label="Annotation visibility"><svg class="ico blue" viewBox="0 0 16 16"><path d="M7 2v5L2 14M7 7l5 7M4 9h6" stroke-width="3"/><circle cx="12" cy="4" r="2"/></svg></button>
      <button aria-label="Auto scale"><svg class="ico" viewBox="0 0 16 16"><path d="M7 2v5L2 14M7 7l5 7M4 9h6" stroke-width="3"/><path d="M13 2l-2 3h3l-2 3"/></svg></button>
      <button aria-label="Annotation scale"><svg class="ico" viewBox="0 0 16 16"><path d="M8 2v5l-5 7M8 7l5 7M5 9l3 2 3-2" stroke-width="3"/></svg></button>
      <button class="scale">1:1 / 100%<i class="tri"></i></button>
      <button aria-label="Workspace"><svg class="ico" viewBox="0 0 16 16"><circle cx="8" cy="8" r="3" stroke-width="3"/><path d="M8 2v2M8 12v2M2 8h2M12 8h2M4 4l1 1M11 11l1 1M12 4l-1 1M5 11l-1 1" stroke-width="2"/></svg></button>
      <button class="drop" aria-label="Workspace list"></button>
      <button aria-label="Monitor"><svg class="ico" viewBox="0 0 16 16"><path d="M8 2v12M2 8h12" stroke-width="2"/></svg></button>
      <i class="sep"></i>
      <label class="units"><svg class="ico" viewBox="0 0 16 16"><path d="M6 2h5M6 14h5" /><path d="M7 3v10" stroke-width="3"/><path d="M8 5h3M8 8h3M8 11h3"/></svg>
        <select aria-label="Units"><option>Decimal</option></select></label>
      <button aria-label="Quick properties"><svg class="ico" viewBox="0 0 16 16"><rect x="4.500" y="3.500" width="7" height="9"/><path d="M6 6h4M6 8.500h4M6 11h4" stroke-dasharray="1 1"/></svg></button>
      <i class="sep"></i>
      <button aria-label="Performance"><svg class="ico" viewBox="0 0 16 16"><circle cx="8" cy="8" r="6.500" fill="#0f529c" stroke="#4aa0f0"/><path d="M8 9l3-3" stroke="#7fb8f0"/></svg></button>
      <button aria-label="Plot"><svg class="ico" viewBox="0 0 16 16"><path d="M3 2h7l3 3v8H3z" fill="#a8bcd4"/><path d="M1.500 7h7v5h-7z" fill="#f0d060"/><path d="M7 11l2 3 6-6" stroke="#4aa830" stroke-width="2"/></svg></button>
      <button aria-label="Isolate objects"><svg class="ico" viewBox="0 0 16 16"><rect x="1.500" y="2.500" width="5" height="5"/><circle cx="12" cy="7" r="2.500"/><path d="M4 14l3-4 3 4z"/></svg></button>
      <i class="sep"></i>
      <button aria-label="Clean screen"><svg class="ico" viewBox="0 0 16 16"><rect x="1.500" y="3.500" width="13" height="10"/><path d="M4 11l3-3M4 8v3h3M12 6L9 9M12 9V6H9"/></svg></button>
      <button aria-label="Customization"><svg class="ico" viewBox="0 0 16 16"><path d="M2 4h12M2 8h12M2 12h12" stroke-width="2"/></svg></button>
    </div>
  </footer>
</body>
</html>
```
FILE: styles.css
```
* { box-sizing: border-box; }

body {
  margin: 0;
  height: 100vh;
  display: flex;
  flex-direction: column;
  font: 10px/13px Roboto, "Open Sans", sans-serif;
  color: #333;
  background: #f0f0f0;
  overflow: hidden;
}

button, input, select {
  font: inherit;
  color: inherit;
  margin: 0;
  padding: 0;
  border: 0;
  background: none;
}

button {
  display: flex;
  align-items: center;
  justify-content: center;
  white-space: nowrap;
}

h1, h2, p { margin: 0; font-weight: normal; font-size: inherit; }

.ico, .ico-lg { fill: none; stroke: #555a60; flex: none; }
.ico { width: 16px; height: 16px; }
.ico-lg { width: 28px; height: 28px; }
.ico.dim { stroke: #8c8c8c; }
.ico.blue { stroke: #3f8fe0; }

.drop::after, .tri {
  content: "";
  display: inline-block;
  border: 3px solid transparent;
  border-top: 4px solid #333;
  border-bottom: 0;
}

/* title bar */
.titlebar {
  display: flex;
  height: 20px;
  flex: none;
  background: #fff;
  position: relative;
}

.app-btn {
  position: absolute;
  left: 0;
  top: 0;
  z-index: 2;
  width: 34px;
  height: 34px;
  border: 1px solid #222;
  background: linear-gradient(#e4e4e4, #9c9c9c);
}
.app-btn span {
  position: absolute;
  bottom: 0;
  left: 12px;
  font-size: 7px;
  line-height: 8px;
  color: #111;
}

.qat {
  display: flex;
  margin-left: 34px;
  padding-left: 4px;
  width: 257px;
  background: #d2d2d2;
  border-right: 1px solid #888;
  border-bottom: 1px solid #aaa;
}
.qat button { width: 20px; }
.qat .drop { width: 10px; }
.qat .more { width: 12px; }
.qat .more::after { border-width: 4px 3px 0; box-shadow: 0 -2px 0 -1px #333; }

.doc-title {
  flex: 1;
  text-align: center;
  line-height: 20px;
  color: #111;
}
.doc-title span { margin-left: 8px; }

.infocenter {
  display: flex;
  align-items: stretch;
  width: 342px;
  background: #d2d2d2;
  border: 1px solid #888;
  border-top: 0;
}
.collapse { width: 11px; }
.search {
  width: 150px;
  padding: 0 3px;
  border: 1px solid #222;
  background: #fff;
}
.search::placeholder { font-style: italic; color: #666; opacity: 1; }
.infocenter button { min-width: 20px; }
.infocenter .collapse, .infocenter .drop { min-width: 11px; }
.infocenter .signin { flex: 1; justify-content: flex-start; gap: 4px; color: #111; }
.infocenter .help { border-left: 1px solid #bbb; width: 27px; }
.infocenter .exchange { width: 24px; margin-right: 4px; }

.win-btns {
  display: flex;
  width: 135px;
  padding-left: 20px;
}
.win-btns button { width: 38px; }

/* ribbon */
.ribbon-tabs {
  display: flex;
  height: 17px;
  flex: none;
  padding-left: 38px;
  background: #9f9f9f;
}
.ribbon-tabs button { padding: 0 8px; color: #222; }
.ribbon-tabs .active { background: #f2f2f2; margin-right: 1px; }
.ribbon-tabs .ribbon-min { margin-left: 12px; }

.ribbon {
  display: flex;
  height: 85px;
  flex: none;
  padding-left: 2px;
  border-bottom: 4px solid #ececec;
  background: linear-gradient(#e6e6e6, #a2a2a2);
}

.panel {
  display: flex;
  flex-direction: column;
  flex: none;
  background: #fdfdfd;
  border-right: 1px solid #bdbdbd;
}
.panel .tools {
  flex: 1;
  display: flex;
  justify-content: center;
}
.panel h2 {
  height: 15px;
  line-height: 15px;
  text-align: center;
  background: #efefef;
}
.panel .tri { margin-left: 3px; vertical-align: middle; }
.definition { width: 202px; }
.description { width: 136px; }
.tables { width: 137px; }
.steel { width: 110px; }
.modify { width: 314px; }
.utilities { width: 170px; }
.graphic { width: 127px; }
.settings { width: 124px; }
.utilities .tools { justify-content: flex-start; border-right: 1px solid #d8d8d8; margin-right: 5px; }

.big {
  flex-direction: column;
  justify-content: flex-start;
  width: 76px;
  padding-top: 7px;
}
.description .big { width: 54px; }
.panel .big.wide { width: 58px; }
.big.narrow { width: 34px; }
.big.table-el { width: 40px; }
.big.mod { width: 70px; }
.big.mod-desc { width: 120px; }

.small-grid {
  display: grid;
  grid-auto-rows: 20px;
  padding-top: 4px;
}
.cols-1 { grid-template-columns: 20px; }
.cols-2 { grid-template-columns: repeat(2, 20px); }
.cols-3 { grid-template-columns: repeat(3, 20px); }
.cols-6 { grid-template-columns: repeat(6, 20px); }

/* workspace */
.workspace {
  flex: 1;
  min-height: 0;
  display: grid;
  grid-template-columns: 282px 1fr;
}

.palette {
  display: flex;
  flex-direction: column;
  margin: 2px 1px 1px 0;
  padding: 0 6px 11px 6px;
  border: 1px solid #8c8c8c;
  border-top-color: #fff;
  border-left-color: #fff;
  border-right-width: 2px;
  font: 10px/14px "Liberation Sans", sans-serif;
  color: #111;
}
.palette-grip {
  height: 18px;
  margin: 0 -6px;
  padding: 5px 6px;
  line-height: 0;
  background: #e5e5e5;
}
.filter-row { display: flex; gap: 9px; margin-top: 4px; align-items: center; }
select { appearance: none; }
.filter-row select {
  width: 149px;
  height: 18px;
  padding: 0 2px;
  border: 1px solid #888;
  background: #fff url("data:image/svg+xml,%3Csvg xmlns='http://www.w3.org/2000/svg' width='8' height='5'%3E%3Cpath d='M1 1l3 3 3-3' fill='none' stroke='%23555'/%3E%3C/svg%3E") no-repeat right 3px center;
}
.filter-row button, .action-row button {
  border: 1px solid #d4d4d4;
  border-radius: 3px;
  background: #fdfdfd;
}
.filter-row button { width: 23px; height: 22px; }
.action-row { display: flex; gap: 8px; margin-top: 6px; padding-left: 1px; }
.action-row button { width: 55px; height: 17px; }

.palette-tabs {
  display: flex;
  margin-top: 7px;
  align-items: flex-end;
  font: 11px/14px "Roboto Condensed", "Liberation Sans", sans-serif;
}
.palette-tabs button { height: 16px; padding: 0 2px 2px; border: 1px solid #e6e6e6; border-bottom: 0; }
.palette-tabs .active { height: 18px; padding: 0 5px 3px; background: #fafafa; }

.tab-page {
  flex: 1;
  padding: 8px 10px 10px 11px;
  border: 1px solid #e2e2e2;
  background: #fafafa;
  display: flex;
}
.object-list { flex: 1; border: 1px solid #666; background: #fff; }

.props {
  height: 57px;
  margin-top: 11px;
  border: 1px solid #8c8c8c;
  border-spacing: 0;
  background: #fff;
}
.props td { padding: 0; border: 1px solid #ededed; border-width: 0 1px 1px 0; width: 47%; }
.props td:last-child { width: 6%; }

.editor { display: flex; flex-direction: column; min-width: 0; min-height: 0; }

/* drawing */
.drawing {
  flex: 1;
  min-height: 0;
  width: 100%;
  background: #212830;
}
.thin, .scrawl, .leader, .dim-line, .bar, .stub { fill: none; }
.stub { stroke: #0505e0; stroke-width: 4; }
.scrawl { stroke: #fff; }
.leader { stroke: #8b9096; }
.dim-line { stroke: #d21ed2; }
.bar { stroke: #1414b8; stroke-width: 3; }
.tags { fill: none; stroke: #c01820; }

.axis-name { font: 32px "DejaVu Sans", sans-serif; fill: #fff; text-anchor: middle; }
.spacing { font: 20px "DejaVu Sans", sans-serif; fill: #d81ed8; text-anchor: middle; }
.tag-no, .bar-text, .dim-text { font-family: "Roboto Condensed", "Liberation Sans", sans-serif; }
.tag-no { font-size: 14px; fill: #22c83c; text-anchor: middle; }
.bar-text { font-size: 16px; fill: #d6d632; }
.bar-text tspan { font-style: italic; }
.dim-text { font-size: 10px; fill: #e0e030; text-anchor: middle; }
.dim-text.small { font-size: 8px; }
.tag-no.tiny { font-size: 6px; }
.bar-text.tiny { font-size: 8px; }

.cube { font: bold 17px "Liberation Sans", sans-serif; fill: #a4a9ae; text-anchor: middle; }
.cube .face { font-size: 10px; fill: #50565e; }
.wcs { font: 9px "Liberation Sans", sans-serif; fill: #c8ccd2; }
.view-label { font: 10px Roboto, sans-serif; fill: #d8dade; }

/* command line */
.command {
  position: relative;
  display: flex;
  height: 46px;
  flex: none;
  padding-left: 1px;
  border-top: 2px solid #e8e8e8;
  border-bottom: 1px solid #999;
  font: 10px/14px "Liberation Mono", monospace;
}
.command-side { width: 19px; background: linear-gradient(#999, #444); }
.command-body { flex: 1; display: flex; flex-direction: column; background: #fff; }
.command p {
  height: 25px;
  padding: 11px 1px 0;
  line-height: 13px;
  color: #111;
  background: #c8c8c8;
  border-bottom: 1px solid #999;
}
.prompt { flex: 1; display: flex; align-items: center; padding: 1px 0 0 4px; }
.prompt .drop { width: 12px; }
.prompt .drop::after { border-top-color: #888; }
.prompt input { flex: 1; font-style: italic; padding-left: 2px; }
.prompt input::placeholder { color: #888; opacity: 1; }
.mark {
  position: absolute;
  left: 422px;
  top: 12px;
  width: 192px;
  height: 36px;
  fill: none;
  stroke: #d8d8d8;
  stroke-width: 6;
  opacity: 0.600;
  pointer-events: none;
}

/* footer */
.footer {
  display: flex;
  height: 23px;
  flex: none;
  background: #b4b4b4;
}
.layout-tabs { flex: 1; display: flex; padding: 1px 0 7px 8px; }
.layout-tabs button {
  width: 54px;
  color: #666;
  background: #dcdcdc;
  clip-path: polygon(0 0, 100% 0, 92% 80%, 86% 100%, 14% 100%, 8% 80%);
}
.layout-tabs .active { width: 50px; font-weight: bold; color: #000; background: #fff; }
.layout-tabs .add { width: 22px; margin-left: 2px; }

.status {
  display: flex;
  align-items: center;
  width: 1045px;
  background: #e6e6e6;
  color: #111;
}
.status button { width: 20px; height: 22px; }
.status .drop { width: 14px; }
.status .coords { width: 178px; padding-left: 22px; }
.status .model { width: 42px; }
.status .scale { width: 64px; gap: 4px; }
.sep { width: 3px; height: 22px; border-right: 1px solid #f6f6f6; }
.units { display: flex; align-items: center; gap: 4px; }
.units select {
  width: 62px;
  margin-right: 2px;
  padding-left: 2px;
  background: url("data:image/svg+xml,%3Csvg xmlns='http://www.w3.org/2000/svg' width='6' height='4'%3E%3Cpath d='M0 0h6L3 4z' fill='%23333'/%3E%3C/svg%3E") no-repeat right 3px center;
}
```
